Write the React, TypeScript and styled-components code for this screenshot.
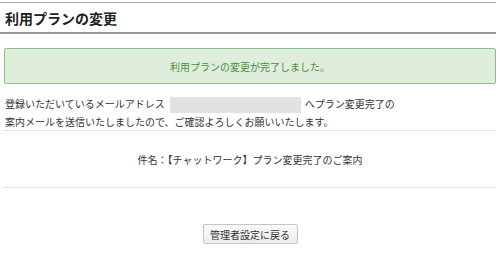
import styled, { createGlobalStyle } from 'styled-components';

const GlobalStyle = createGlobalStyle`
  html, body {
    margin: 0;
    padding: 0;
    background: #ffffff;
  }
  body {
    font-family: 'Noto Sans CJK JP', 'Noto Sans', sans-serif;
    color: #333333;
  }
`;

export default function App() {
  return (
    <>
      <GlobalStyle />
      <Page>
        <Header>
          <Title>利用プランの変更</Title>
        </Header>

        <Body>
          <Notice>利用プランの変更が完了しました。</Notice>

          <Message>
            登録いただいているメールアドレス
            <Masked />
            へプラン変更完了の
            <br />
            案内メールを送信いたしましたので、ご確認よろしくお願いいたします。
          </Message>

          <Subject>件名：【チャットワーク】プラン変更完了のご案内</Subject>

          <Actions>
            <BackButton type="button">管理者設定に戻る</BackButton>
          </Actions>
        </Body>
      </Page>
    </>
  );
}

/* STYLES */
const Page = styled.div`
  width: 496px;
  padding-top: 2px;
`;

const Header = styled.div`
  border-top: 1px solid #a8a8a8;
  border-bottom: 2px solid #9a9a9a;
  height: 29px;
  display: flex;
  align-items: center;
  padding-left: 5px;
`;

const Title = styled.h1`
  margin: 0;
  font-size: 14px;
  font-weight: 700;
  color: #222222;
  line-height: 1;
`;

const Body = styled.div`
  padding-left: 4px;
`;

const Notice = styled.div`
  margin-top: 14px;
  height: 36px;
  box-sizing: border-box;
  display: flex;
  align-items: center;
  justify-content: center;
  background: #dfeedb;
  border: 1px solid #8fbd89;
  border-radius: 2px;
  color: #4f8a43;
  font-size: 10px;
`;

const Message = styled.p`
  margin: 11px 0 0;
  padding: 0 0 0 1px;
  font-size: 10px;
  line-height: 17px;
  border-bottom: 1px dotted #cfcfcf;
`;

const Masked = styled.span`
  display: inline-block;
  width: 131px;
  height: 16px;
  margin: 0 4px 0 5px;
  background: #e2e2e2;
  vertical-align: middle;
`;

const Subject = styled.div`
  height: 56px;
  display: flex;
  align-items: center;
  justify-content: center;
  font-size: 10px;
  border-bottom: 1px dotted #cfcfcf;
`;

const Actions = styled.div`
  display: flex;
  justify-content: center;
  padding-top: 36px;
`;

const BackButton = styled.button`
  width: 95px;
  height: 20px;
  padding: 0;
  font-family: inherit;
  font-size: 10px;
  color: #333333;
  background: linear-gradient(#fafafa, #ececec);
  border: 1px solid #c4c4c4;
  border-radius: 2px;
  cursor: pointer;
`;
